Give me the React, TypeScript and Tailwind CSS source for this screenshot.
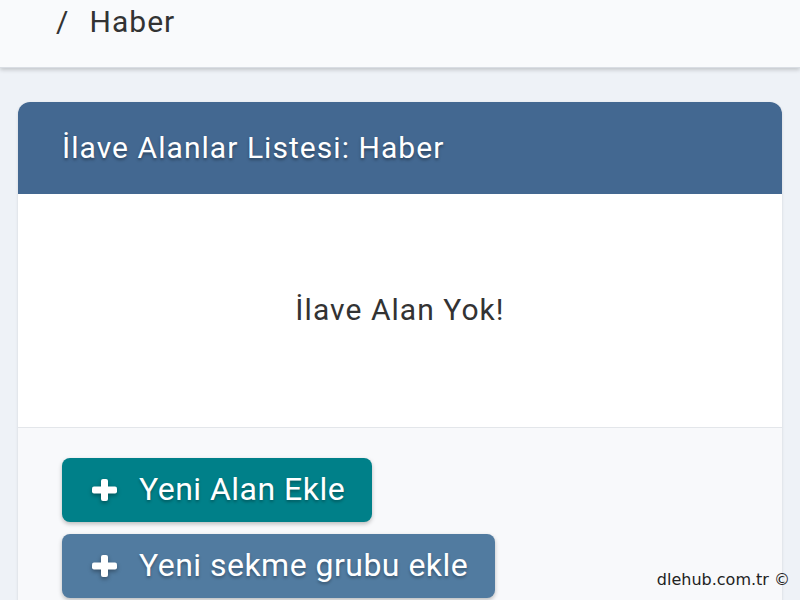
import React from 'react';

const font = { fontFamily: 'Roboto, "Noto Sans", sans-serif' };

function PlusIcon() {
  return (
    <svg width="25" height="22" viewBox="0 0 25 22" className="drop-shadow-[0_2px_2px_rgba(0,0,0,0.35)]">
      <rect x="9" y="0" width="7" height="22" rx="2" fill="white" />
      <rect x="0" y="7.5" width="25" height="7" rx="2" fill="white" />
    </svg>
  );
}

export default function App() {
  return (
    <div className="w-[800px] h-[600px] overflow-hidden bg-[#eef2f7] relative tracking-[0.03em]" style={font}>
      {/* breadcrumb bar */}
      <div className="h-[68px] bg-[#f9fafc] shadow-[0_2px_4px_rgba(0,0,0,0.18)] border-b border-[#d9dde3] flex items-start">
        <div className="pl-[56px] pt-[3px] text-[30px] text-[#333] flex gap-[20px] leading-[38px] tracking-[0.035em]">
          <span>/</span>
          <span>Haber</span>
        </div>
      </div>

      <div className="px-[18px] pt-[34px]">
        <div className="rounded-[12px] overflow-hidden bg-white shadow-[0_1px_3px_rgba(0,0,0,0.12)]">
          <div className="h-[92px] bg-[#436891] flex items-center px-[44px]">
            <h2
              className="text-[30px] text-white whitespace-nowrap pb-[2px] tracking-[0.035em]"
              style={{ textShadow: '0 2px 3px rgba(0,0,0,0.35)' }}
            >
              İlave Alanlar Listesi: Haber
            </h2>
          </div>
          <div className="h-[234px] flex items-center justify-center border-b border-[#e3e6ea]">
            <p className="text-[30px] text-[#333] pb-[2px] tracking-[0.035em]">İlave Alan Yok!</p>
          </div>
          <div className="bg-[#f8f9fb] px-[44px] pt-[30px] pb-[20px] flex flex-col items-start gap-[12px]">
            <button className="h-[64px] pl-[30px] pr-[27px] rounded-[8px] bg-[#008089] text-white text-[32px] flex items-center gap-[22px] shadow-[0_2px_4px_rgba(0,0,0,0.25)]">
              <PlusIcon />
              <span className="pb-[2px]" style={{ textShadow: '0 2px 3px rgba(0,0,0,0.3)' }}>Yeni Alan Ekle</span>
            </button>
            <button className="h-[64px] pl-[30px] pr-[27px] rounded-[8px] bg-[#517ba0] text-white text-[32px] flex items-center gap-[22px] shadow-[0_2px_4px_rgba(0,0,0,0.25)]">
              <PlusIcon />
              <span className="pb-[2px]" style={{ textShadow: '0 2px 3px rgba(0,0,0,0.3)' }}>Yeni sekme grubu ekle</span>
            </button>
          </div>
        </div>
      </div>

      <div
        className="absolute right-[10px] bottom-[8px] text-[16px] text-[#222] tracking-normal"
        style={{ fontFamily: '"DejaVu Sans", sans-serif' }}
      >
        dlehub.com.tr ©
      </div>
    </div>
  );
}
